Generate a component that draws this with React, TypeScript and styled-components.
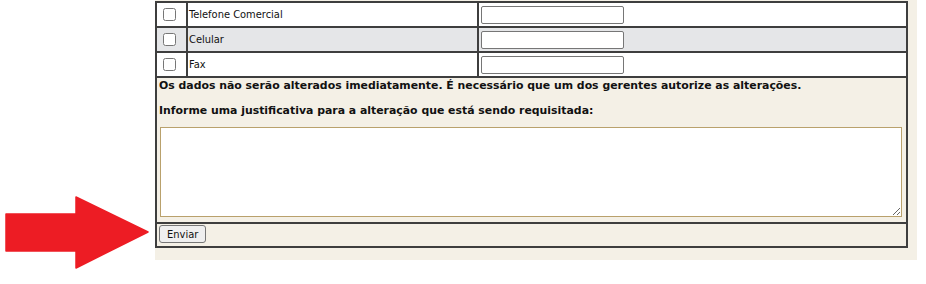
import React from 'react';
import styled, { createGlobalStyle } from 'styled-components';

const GlobalStyle = createGlobalStyle`
	html, body {
		margin: 0;
		padding: 0;
		background: #ffffff;
	}
`;

const Page = styled.div`
	position: relative;
	width: 926px;
	height: 284px;
	overflow: hidden;
`;

const Panel = styled.div`
	box-sizing: border-box;
	margin-left: 155px;
	padding-top: 1px;
	width: 762px;
	height: 260px;
	background: #f4f0e6;
`;

const Table = styled.table`
	width: 753px;
	border-collapse: separate;
	border-spacing: 0;
	border-top: 2px solid #3e3e3e;
	border-left: 2px solid #3e3e3e;
	table-layout: fixed;
	font-family: 'DejaVu Sans Condensed', 'DejaVu Sans', Tahoma, sans-serif;
	font-size: 11px;
	color: #111;
`;

interface RowProps {
	shaded?: boolean;
}

const Row = styled.tr<RowProps>`
	background: ${(props) => (props.shaded ? '#e5e6e8' : '#ffffff')};
`;

const Cell = styled.td`
	box-sizing: border-box;
	height: 25px;
	border-right: 2px solid #3e3e3e;
	border-bottom: 2px solid #3e3e3e;
	padding: 0 0 0 1px;
	vertical-align: middle;
`;

const CheckCell = styled(Cell)`
	width: 31px;
	padding: 0 0 0 6px;
`;

const LabelCell = styled(Cell)`
	width: 291px;
`;

const InputCell = styled(Cell)`
	padding-left: 2px;
`;

const Check = styled.input`
	width: 13px;
	height: 13px;
	margin: 0;
	display: block;
`;

const TextInput = styled.input`
	box-sizing: border-box;
	width: 143px;
	height: 18px;
	margin: 0;
	padding: 0 2px;
	border: 1px solid #767676;
	border-radius: 2px;
	background: #fff;
	display: block;
`;

const MessageCell = styled(Cell)`
	height: auto;
	background: #f4f0e6;
	padding: 0 4px 5px 2px;
`;

const Note = styled.p`
	margin: 0;
	font-family: 'DejaVu Sans', Verdana, sans-serif;
	font-size: 10.9px;
	font-weight: bold;
	line-height: 16px;
	white-space: nowrap;
`;

const Prompt = styled(Note)`
	margin-top: 9px;
`;

const Justificativa = styled.textarea`
	box-sizing: border-box;
	display: block;
	width: 742px;
	height: 90px;
	margin: 8px 0 0 1px;
	border: 1px solid #b9a16c;
	background: #fff;
	font-family: inherit;
`;

const ButtonCell = styled(Cell)`
	height: auto;
	background: #f4f0e6;
	padding: 1px 2px 3px 2px;
`;

const Button = styled.button`
	box-sizing: border-box;
	height: 18px;
	padding: 0 7px;
	border: 1px solid #767676;
	border-radius: 3px;
	background: #efefef;
	font-family: 'DejaVu Sans Condensed', 'DejaVu Sans', Tahoma, sans-serif;
	font-size: 11px;
	color: #111;
	display: block;
`;

const Arrow = styled.svg`
	position: absolute;
	left: 0;
	top: 190px;
`;

const campos = [
	{ label: 'Telefone Comercial', shaded: false },
	{ label: 'Celular', shaded: true },
	{ label: 'Fax', shaded: false },
];

const App: React.FC = () => {
	return (
		<>
			<GlobalStyle />
			<Page>
				<Panel>
					<Table>
						<tbody>
							{campos.map((campo) => (
								<Row key={campo.label} shaded={campo.shaded}>
									<CheckCell>
										<Check type="checkbox" />
									</CheckCell>
									<LabelCell>{campo.label}</LabelCell>
									<InputCell>
										<TextInput type="text" />
									</InputCell>
								</Row>
							))}
							<tr>
								<MessageCell colSpan={3}>
									<Note>
										Os dados não serão alterados imediatamente. É necessário que um dos
										gerentes autorize as alterações.
									</Note>
									<Prompt>Informe uma justificativa para a alteração que está sendo requisitada:</Prompt>
									<Justificativa />
								</MessageCell>
							</tr>
							<tr>
								<ButtonCell colSpan={3}>
									<Button type="button">Enviar</Button>
								</ButtonCell>
							</tr>
						</tbody>
					</Table>
				</Panel>
				{/* seta vermelha apontando para o botão */}
				<Arrow width="150" height="82" viewBox="0 0 150 82">
					<polygon
						points="6,24 76,24 76,7 148,42 76,78 76,61 6,61"
						fill="#ed1c24"
						stroke="#ed1c24"
						strokeWidth="1.5"
						strokeLinejoin="round"
					/>
				</Arrow>
			</Page>
		</>
	);
};

export default App;
